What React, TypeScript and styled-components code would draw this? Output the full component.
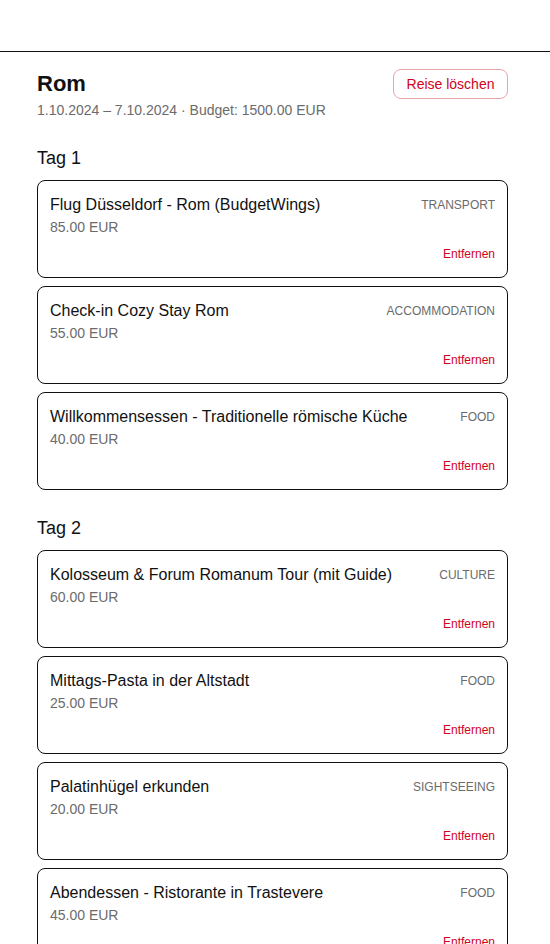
import React from "react";
import styled, { createGlobalStyle } from "styled-components";

const Global = createGlobalStyle`
  * { box-sizing: border-box; }
  body { margin: 0; background: #fff; font-family: "Liberation Sans", Arial, sans-serif; color: #111; }
`;

const TopBar = styled.header`
  height: 52px;
  border-bottom: 1px solid #111;
`;

const Main = styled.main`
  padding: 16px 42px 0 37px;
`;

const TitleRow = styled.div`
  display: flex;
  justify-content: space-between;
  align-items: flex-start;
`;

const TitleBlock = styled.div`
  display: flex;
  flex-direction: column;
`;

const Title = styled.h1`
  margin: 0;
  padding-top: 1px;
  font-size: 22px;
  line-height: 30px;
  font-weight: 700;
  color: #111;
`;

const Meta = styled.div`
  margin-top: 1px;
  font-size: 14px;
  line-height: 20px;
  color: #6b6b6b;
`;

const DeleteButton = styled.button`
  font-family: inherit;
  font-size: 14px;
  color: #d0021b;
  background: #fff;
  border: 1px solid #eaa3ab;
  border-radius: 8px;
  height: 30px;
  margin-top: 1px;
  padding: 0 12px;
  width: 115px;
  cursor: pointer;
`;

const Day = styled.section`
  margin-top: 27px;
`;

const DayTitle = styled.h2`
  margin: 0 0 11px;
  font-size: 18px;
  line-height: 22px;
  font-weight: 400;
  color: #111;
`;

const List = styled.div`
  display: flex;
  flex-direction: column;
  gap: 8px;
`;

const Card = styled.div`
  border: 1px solid #111;
  border-radius: 8px;
  padding: 13px 12px 12px;
  height: 98px;
`;

const CardTop = styled.div`
  display: flex;
  justify-content: space-between;
  align-items: flex-start;
`;

const ItemName = styled.div`
  font-size: 16px;
  line-height: 22px;
  color: #111;
`;

const Category = styled.div`
  font-size: 12px;
  line-height: 22px;
  color: #6b6b6b;
  text-transform: uppercase;
`;

const Price = styled.div`
  font-size: 14px;
  line-height: 20px;
  color: #6b6b6b;
  margin-top: 1px;
`;

const Actions = styled.div`
  display: flex;
  justify-content: flex-end;
  margin-top: 9px;
`;

const RemoveLink = styled.button`
  font-family: inherit;
  font-size: 12px;
  line-height: 16px;
  color: #d0021b;
  background: none;
  border: none;
  padding: 0;
  cursor: pointer;
`;

type Item = { name: string; price: string; cat: string };

const days: { title: string; items: Item[] }[] = [
  {
    title: "Tag 1",
    items: [
      { name: "Flug Düsseldorf - Rom (BudgetWings)", price: "85.00 EUR", cat: "transport" },
      { name: "Check-in Cozy Stay Rom", price: "55.00 EUR", cat: "accommodation" },
      { name: "Willkommensessen - Traditionelle römische Küche", price: "40.00 EUR", cat: "food" },
    ],
  },
  {
    title: "Tag 2",
    items: [
      { name: "Kolosseum & Forum Romanum Tour (mit Guide)", price: "60.00 EUR", cat: "culture" },
      { name: "Mittags-Pasta in der Altstadt", price: "25.00 EUR", cat: "food" },
      { name: "Palatinhügel erkunden", price: "20.00 EUR", cat: "sightseeing" },
      { name: "Abendessen - Ristorante in Trastevere", price: "45.00 EUR", cat: "food" },
    ],
  },
];

export default function App() {
  return (
    <>
      <Global />
      <TopBar />
      <Main>
        <TitleRow>
          <TitleBlock>
            <Title>Rom</Title>
            <Meta>1.10.2024 – 7.10.2024 · Budget: 1500.00 EUR</Meta>
          </TitleBlock>
          <DeleteButton>Reise löschen</DeleteButton>
        </TitleRow>
        {days.map((d) => (
          <Day key={d.title}>
            <DayTitle>{d.title}</DayTitle>
            <List>
              {d.items.map((it) => (
                <Card key={it.name}>
                  <CardTop>
                    <ItemName>{it.name}</ItemName>
                    <Category>{it.cat}</Category>
                  </CardTop>
                  <Price>{it.price}</Price>
                  <Actions>
                    <RemoveLink>Entfernen</RemoveLink>
                  </Actions>
                </Card>
              ))}
            </List>
          </Day>
        ))}
      </Main>
    </>
  );
}
